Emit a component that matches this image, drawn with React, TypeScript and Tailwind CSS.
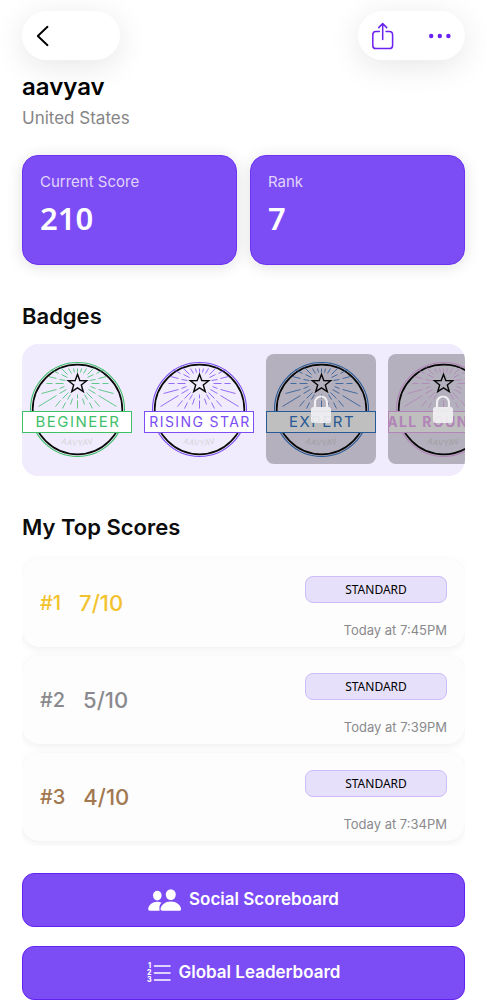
import { useId } from "react";

type Badge = {
  label: string;
  ring: string;
  text: string;
  locked: boolean;
};

type Score = {
  rank: number;
  score: string;
  mode: string;
  date: string;
  color: string;
};

const badges: Badge[] = [
  { label: "BEGINEER", ring: "#3fbf6a", text: "text-[15px]", locked: false },
  { label: "RISING STAR", ring: "#7c4df5", text: "text-sm", locked: false },
  { label: "EXPERT", ring: "#3577c8", text: "text-[15px]", locked: true },
  { label: "ALL ROUNDER", ring: "#eeb0f5", text: "text-sm font-bold", locked: true },
];

const scores: Score[] = [
  { rank: 1, score: "7/10", mode: "STANDARD", date: "Today at 7:45PM", color: "text-[#f2c32e]" },
  { rank: 2, score: "5/10", mode: "STANDARD", date: "Today at 7:39PM", color: "text-[#8a8a8e]" },
  { rank: 3, score: "4/10", mode: "STANDARD", date: "Today at 7:34PM", color: "text-[#a27850]" },
];

// [x1, y1, x2, y2] from the star center, left half only (mirrored for the right)
const rays = [
  [-31, 0, -25, 0],
  [-22, 0, -14, 0],
  [-36, 10, -21, 6],
  [-18, 5, -13, 3],
  [-39, 23, -21, 12],
  [-18, 10, -11, 6],
  [-22, 23, -17, 17],
  [-15, 15, -9, 9],
  [-15, 25, -12, 19],
  [-10, 16, -7, 11],
  [-7, 21, -5, 15],
  [-29, -7, -21, -5],
  [-18, -4, -12, -3],
  [-26, -14, -19, -10],
  [-16, -9, -10, -6],
  [-17, -16, -10, -9],
  [-9, -15, -6, -10],
  [-4, -15, -3, -11],
];

const BadgeArt = ({ label, ring, text }: Badge) => {
  const id = useId();
  return (
    <svg viewBox="0 0 110 110" className="block h-[110px] w-[110px]">
      <circle cx="55.5" cy="55.5" r="47" fill="none" stroke={ring} strokeWidth="1.1" />
      <circle cx="55.5" cy="55.5" r="44.8" fill="none" stroke="#0a0a0a" strokeWidth="1.7" />
      <g transform="translate(55.5 29.5)" stroke={ring} strokeWidth="0.8">
        {rays.map(([x1, y1, x2, y2], i) => (
          <g key={i}>
            <line x1={x1} y1={y1} x2={x2} y2={y2} />
            <line x1={-x1} y1={y1} x2={-x2} y2={y2} />
          </g>
        ))}
        <line x1="0" y1="-15" x2="0" y2="-11" />
        <line x1="0" y1="11" x2="0" y2="15" />
        <line x1="0" y1="17" x2="0" y2="25" />
        <path
          d="M0 -9.3 L2.3 -3 L9.2 -2.8 L3.8 1.4 L5.8 8.2 L0 4.3 L-5.8 8.2 L-3.8 1.4 L-9.2 -2.8 L-2.3 -3 Z"
          fill="none"
          stroke="#0a0a0a"
          strokeWidth="1.4"
        />
      </g>
      <path id={id} d="M30 86 A60 60 0 0 0 81 86" fill="none" />
      <text className="font-['Lato'] text-[8px] italic tracking-widest" fill="#d6d4d8" textAnchor="middle">
        <textPath href={`#${id}`} startOffset="50%">
          AAVYAV
        </textPath>
      </text>
      <rect x="0.5" y="57.5" width="109" height="21" fill="#fff" stroke={ring} />
      <text x="56" y="73" className={`font-['Inter'] tracking-widest ${text}`} fill={ring} textAnchor="middle">
        {label}
      </text>
    </svg>
  );
};

const LockIcon = () => (
  <svg viewBox="0 0 20 28" className="h-7 w-5" fill="none">
    <path d="M4 12 V7.5 a6 6 0 0 1 12 0 V12" stroke="#f1f0f2" strokeWidth="2.2" />
    <rect x="0" y="12" width="20" height="16" rx="2.5" fill="#f1f0f2" fillOpacity="0.92" />
  </svg>
);

const StatCard = ({ label, value }: { label: string; value: string }) => (
  <div className="h-[110px] flex-1 rounded-2xl border border-[#6d33f2] bg-[#7c4df5] px-[17px] pt-4 shadow-[0_2px_16px_rgba(0,0,0,0.12)]">
    <p className="text-[15px] leading-5 text-[#e0d5fc]">{label}</p>
    <p className="mt-1.5 font-['Noto_Sans'] text-[31px] leading-10 font-semibold text-white">{value}</p>
  </div>
);

const App = () => {
  return (
    <div className="bg-white px-[22px] pt-[11px] font-['Inter',sans-serif] text-[#0c0c0c]">
      {/* Top bar */}
      <header className="flex items-center justify-between">
        <button
          aria-label="Back"
          className="flex h-[49px] w-[98px] items-center rounded-full bg-white pl-[14px] shadow-[0_6px_32px_rgba(0,0,0,0.1)]"
        >
          <svg viewBox="0 0 14 22" className="h-[22px] w-[14px]" fill="none" stroke="#000" strokeWidth="1.9" strokeLinecap="round" strokeLinejoin="round">
            <path d="M11.5 1.8 L1.8 11 L11.5 20.2" />
          </svg>
        </button>
        <div className="flex h-[49px] w-[107px] items-center justify-between rounded-full bg-white px-[13px] shadow-[0_6px_32px_rgba(0,0,0,0.1)]">
          <button aria-label="Share">
            <svg viewBox="0 0 24 30" className="h-[30px] w-6" fill="none" stroke="#6a22f0" strokeWidth="1.5" strokeLinecap="round" strokeLinejoin="round">
              <path d="M8.3 10.5 H5 a3.2 3.2 0 0 0 -3.2 3.2 V24.4 a3.2 3.2 0 0 0 3.2 3.2 H18.4 a3.2 3.2 0 0 0 3.2 -3.2 V13.7 a3.2 3.2 0 0 0 -3.2 -3.2 H15.1" />
              <path d="M11.7 18.5 V2.8 M7.7 6.6 L11.7 2.6 L15.7 6.6" />
            </svg>
          </button>
          <button aria-label="More">
            <svg viewBox="0 0 24 6" className="h-1.5 w-6" fill="#6a22f0">
              <circle cx="3.2" cy="3" r="2.2" />
              <circle cx="11.8" cy="3" r="2.2" />
              <circle cx="20.4" cy="3" r="2.2" />
            </svg>
          </button>
        </div>
      </header>

      {/* Profile */}
      <h1 className="mt-[11px] text-2xl leading-8 font-semibold text-black">aavyav</h1>
      <p className="mt-[3px] text-[17px] leading-6 text-[#858587]">United States</p>

      <div className="mt-[25px] flex gap-[13px]">
        <StatCard label="Current Score" value="210" />
        <StatCard label="Rank" value="7" />
      </div>

      {/* Badges */}
      <h2 className="mt-[35px] text-[22px] leading-8 font-semibold">Badges</h2>
      <div className="mt-3 flex gap-3 overflow-hidden rounded-2xl bg-[#f0ebfd] pt-[10px] pb-3">
        {badges.map((badge) => (
          <div key={badge.label} className="relative shrink-0">
            <BadgeArt {...badge} />
            {badge.locked && (
              <div className="absolute inset-0 flex items-center justify-center rounded-lg bg-black/25">
                <LockIcon />
              </div>
            )}
          </div>
        ))}
      </div>

      {/* Scores */}
      <h2 className="mt-[35px] text-[22px] leading-8 font-semibold">My Top Scores</h2>
      <ul className="mt-3 flex flex-col gap-[9px] overflow-hidden pt-1 pb-[5px]">
        {scores.map((item) => (
          <li
            key={item.rank}
            className="flex h-[88px] items-center justify-between rounded-[18px] bg-[#fdfdfd] px-[18px] shadow-[0_2px_8px_rgba(0,0,0,0.07)]"
          >
            <div className={`flex items-center gap-[18px] font-medium ${item.color}`}>
              <span className="text-xl">#{item.rank}</span>
              <span className="text-[22px]">{item.score}</span>
            </div>
            <div className="flex flex-col items-end gap-[17px] pt-2.5">
              <span className="flex h-[27px] w-[142px] items-center justify-center rounded-lg border border-[#cdbbfa] bg-[#e7e0fa] font-['Noto_Sans'] text-xs text-black">
                {item.mode}
              </span>
              <span className="text-[13px] leading-5 text-[#8a8a8d]">{item.date}</span>
            </div>
          </li>
        ))}
      </ul>

      {/* Actions */}
      <div className="mt-[27px] flex flex-col gap-[19px]">
        <button className="flex h-[54px] items-center justify-center gap-2 rounded-xl border border-[#6422f0] bg-[#7c4df5] text-[17px] font-semibold text-white">
          <svg viewBox="0 0 33 22" className="h-[22px] w-[33px]" fill="#fff">
            <ellipse cx="9.3" cy="6.6" rx="4.3" ry="4.8" />
            <path d="M13.6 13.8 C11 16 11.4 18.5 11.6 21.8 H2 C0.6 21.8 0 21 0.2 19.8 C0.9 16 4.5 12.8 9.3 12.8 C10.9 12.8 12.4 13.2 13.6 13.8 Z" />
            <ellipse cx="22.8" cy="5.6" rx="5" ry="5.4" />
            <path d="M22.8 12.4 C17.2 12.4 13.2 15.8 12.6 19.6 C12.4 21 13 21.8 14.4 21.8 H31.2 C32.6 21.8 33.2 21 33 19.6 C32.4 15.8 28.4 12.4 22.8 12.4 Z" />
          </svg>
          Social Scoreboard
        </button>
        <button className="flex h-[54px] items-center justify-center gap-2 rounded-xl border border-[#6422f0] bg-[#7c4df5] text-[17px] font-semibold text-white">
          <svg viewBox="0 0 24 26" className="h-[26px] w-6" fill="#fff">
            <path d="M7.5 6 H23 M7.5 13 H23 M7.5 20 H23" stroke="#fff" strokeWidth="1.6" strokeLinecap="round" />
            <text x="1" y="8" className="text-[7px] font-extrabold">1</text>
            <text x="0" y="15" className="text-[7px] font-extrabold">2</text>
            <text x="0" y="22" className="text-[7px] font-extrabold">3</text>
          </svg>
          Global Leaderboard
        </button>
      </div>
    </div>
  );
};

export default App;
